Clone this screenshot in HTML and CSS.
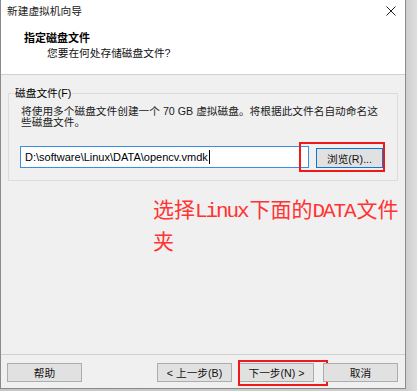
FILE: index.html
```html
<!DOCTYPE html>
<html lang="zh-CN">
<head>
<meta charset="utf-8">
<title>新建虚拟机向导</title>
<link rel="stylesheet" href="styles.css">
</head>
<body>
<div class="window">
  <div class="titlebar">
    <span class="title">新建虚拟机向导</span>
    <svg class="close" width="10" height="10" viewBox="0 0 10 10"><path d="M0.5 0.5 L9.5 9.5 M9.5 0.5 L0.5 9.5" stroke="#222" stroke-width="1" fill="none"/></svg>
  </div>
  <div class="header">
    <div class="h-title">指定磁盘文件</div>
    <div class="h-sub">您要在何处存储磁盘文件?</div>
  </div>
  <div class="content">
    <fieldset class="group">
      <legend>磁盘文件(F)</legend>
      <p class="desc">将使用多个磁盘文件创建一个 70 GB 虚拟磁盘。将根据此文件名自动命名这<br>些磁盘文件。</p>
      <div class="file-row">
        <div class="input">D:\software\Linux\DATA\opencv.vmdk<span class="caret"></span></div>
        <div class="btn default browse">浏览(R)...</div>
        <div class="mark mark-browse"></div>
      </div>
    </fieldset>
    <div class="note">选择<span class="lat">Linux</span>下面的<span class="lat">DATA</span>文件<br>夹</div>
  </div>
  <div class="footer">
    <div class="btn">帮助</div>
    <div class="spacer"></div>
    <div class="btn">&lt; 上一步(B)</div>
    <div class="btn next">下一步(N) &gt;<div class="mark mark-next"></div></div>
    <div class="btn cancel">取消</div>
  </div>
</div>
</body>
</html>
```
FILE: styles.css
```css
html, body {
  margin: 0;
  padding: 0;
}
body {
  width: 417px;
  height: 391px;
  background: linear-gradient(to right, #c6c6c6 0, #cfcfcf 406px, #dedede 417px);
  font-family: "Liberation Sans", "Noto Sans CJK SC", sans-serif;
  font-size: 10.7px;
  color: #000;
  overflow: hidden;
}
.window {
  width: 404px;
  height: 388px;
  border: 1px solid #8a8a8a;
  border-top: none;
  background: #f0f0f0;
  display: flex;
  flex-direction: column;
}
.titlebar {
  height: 22px;
  background: #fff;
  display: flex;
  align-items: flex-start;
  justify-content: space-between;
}
.title {
  margin-left: 6px;
  line-height: 22px;
  color: #1a1a1a;
}
.close {
  margin: 6px 9px 0 0;
}
.header {
  background: #fff;
  padding: 8px 0 14px 23px;
  border-bottom: 1px solid #d0d0d0;
}
.h-title {
  font-weight: bold;
  font-size: 11px;
  line-height: 16px;
}
.h-sub {
  line-height: 14px;
  padding-left: 23px;
  color: #111;
}
.content {
  height: 279px;
  display: flex;
  flex-direction: column;
}
.group {
  margin: 11px 7px 0 7px;
  padding: 0 12px 12px 12px;
  border: 1px solid #dcdcdc;
  min-width: 0;
}
.group legend {
  margin-left: -7px;
  padding: 0 1px;
  line-height: 14px;
}
.desc {
  margin: 6px 0 0 0;
  line-height: 11px;
  white-space: nowrap;
  color: #1a1a1a;
}
.file-row {
  position: relative;
  margin-top: 18px;
  display: flex;
  align-items: flex-start;
}
.input {
  margin-left: -1px;
  width: 283px;
  height: 20px;
  padding-left: 4px;
  border: 1px solid #3c8ce0;
  background: #fff;
  line-height: 20px;
  display: flex;
  align-items: center;
  font-size: 11px;
}
.caret {
  display: inline-block;
  width: 1px;
  height: 14px;
  background: #000;
  margin-left: 1px;
}
.btn {
  box-sizing: border-box;
  width: 75px;
  height: 19px;
  border: 1px solid #adadad;
  background: #e1e1e1;
  display: flex;
  align-items: center;
  justify-content: center;
  position: relative;
  color: #111;
}
.btn.default {
  border-color: #0a78d7;
}
.browse {
  width: 67px;
  height: 20px;
  margin: 2px 0 0 7px;
}
.mark {
  position: absolute;
  border: 2px solid #f01818;
  box-sizing: border-box;
}
.mark-browse {
  left: 278px;
  top: -4px;
  width: 86px;
  height: 30px;
}
.mark-next {
  left: -2px;
  top: -4px;
  width: 90px;
  height: 26px;
}
.note {
  margin: 13px 0 0 152px;
  font-family: "Noto Sans CJK SC", sans-serif;
  font-size: 21px;
  line-height: 29px;
  color: #ff3333;
}
.note .lat {
  font-family: "Liberation Mono", "DejaVu Sans Mono", monospace;
  letter-spacing: -2.1px;
  margin-right: 2px;
}
.footer {
  border-top: 1px solid #d0d0d0;
  padding: 8px 7px 0 6px;
  display: flex;
  align-items: flex-start;
  flex: 1;
}
.spacer {
  flex: 1;
}
.next {
  margin-left: 7px;
}
.cancel {
  margin-left: 9px;
}
```
